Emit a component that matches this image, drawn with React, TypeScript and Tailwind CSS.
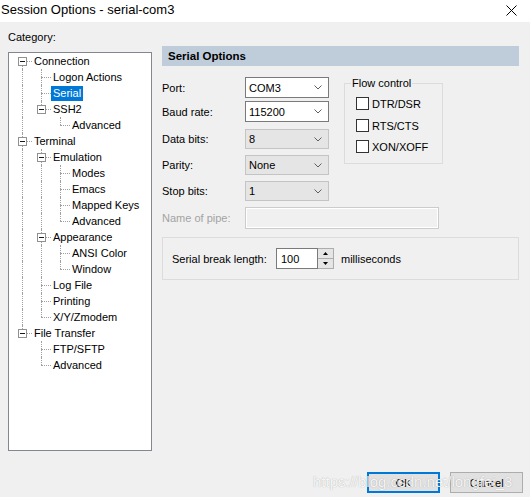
import React from "react";

type Node = {
  label: string;
  level: number;
  exp?: boolean;
  next: boolean;
  anc: boolean[]; // continuation flags of ancestors at levels 0..level-1
  first?: boolean;
  selected?: boolean;
};

const nodes: Node[] = [
  { label: "Connection", level: 0, exp: true, next: true, anc: [], first: true },
  { label: "Logon Actions", level: 1, next: true, anc: [true] },
  { label: "Serial", level: 1, next: true, anc: [true], selected: true },
  { label: "SSH2", level: 1, exp: true, next: false, anc: [true] },
  { label: "Advanced", level: 2, next: false, anc: [true, false] },
  { label: "Terminal", level: 0, exp: true, next: true, anc: [] },
  { label: "Emulation", level: 1, exp: true, next: true, anc: [true] },
  { label: "Modes", level: 2, next: true, anc: [true, true] },
  { label: "Emacs", level: 2, next: true, anc: [true, true] },
  { label: "Mapped Keys", level: 2, next: true, anc: [true, true] },
  { label: "Advanced", level: 2, next: false, anc: [true, true] },
  { label: "Appearance", level: 1, exp: true, next: true, anc: [true] },
  { label: "ANSI Color", level: 2, next: true, anc: [true, true] },
  { label: "Window", level: 2, next: false, anc: [true, true] },
  { label: "Log File", level: 1, next: true, anc: [true] },
  { label: "Printing", level: 1, next: true, anc: [true] },
  { label: "X/Y/Zmodem", level: 1, next: false, anc: [true] },
  { label: "File Transfer", level: 0, exp: true, next: false, anc: [] },
  { label: "FTP/SFTP", level: 1, next: true, anc: [false] },
  { label: "Advanced", level: 1, next: false, anc: [false] },
];

function AncCell({ on }: { on: boolean }) {
  return (
    <div className="relative w-[19px] h-4 shrink-0">
      {on && <span className="absolute left-[9px] top-0 h-4 border-l border-dotted border-[#a0a0a0]" />}
    </div>
  );
}

function OwnCell({ n }: { n: Node }) {
  return (
    <div className="relative w-[19px] h-4 shrink-0">
      {!n.first && <span className="absolute left-[9px] top-0 h-[8px] border-l border-dotted border-[#a0a0a0]" />}
      {n.next && <span className="absolute left-[9px] top-[8px] h-[8px] border-l border-dotted border-[#a0a0a0]" />}
      <span className="absolute left-[9px] top-[8px] w-[10px] border-t border-dotted border-[#a0a0a0]" />
      {n.exp && (
        <span className="absolute left-[5px] top-[4px] w-[9px] h-[9px] border border-[#919191] bg-white flex items-center justify-center">
          <span className="w-[5px] h-px bg-[#1a1a1a]" />
        </span>
      )}
    </div>
  );
}

function Chevron() {
  return (
    <svg width="8" height="5" viewBox="0 0 8 5" className="shrink-0">
      <polyline points="0.5,0.5 4,4 7.5,0.5" fill="none" stroke="#606060" strokeWidth="1" />
    </svg>
  );
}

function Combo({ value, enabled }: { value: string; enabled?: boolean }) {
  return (
    <div
      className={
        enabled
          ? "w-[84px] h-[21px] border border-[#7a7a7a] bg-white flex items-center justify-between pl-[3px] pr-[6px]"
          : "w-[84px] h-[20px] border border-[#c4c4c4] bg-[#e5e5e5] flex items-center justify-between pl-[3px] pr-[6px]"
      }
    >
      <span>{value}</span>
      <Chevron />
    </div>
  );
}

function Check({ label, className }: { label: string; className?: string }) {
  return (
    <div className={"flex items-center h-[13px] " + (className ?? "")}>
      <span className="w-[13px] h-[13px] border border-[#333333] bg-white shrink-0" />
      <span className="ml-[3px] whitespace-nowrap">{label}</span>
    </div>
  );
}

export default function App() {
  return (
    <div className="relative w-[530px] h-[497px] bg-[#f0f0f0] overflow-hidden flex flex-col text-[11px] leading-[14px] text-black font-['Liberation_Sans',Arial,sans-serif]">
      {/* Title bar */}
      <div className="h-[22px] bg-white flex items-start justify-between pt-[2px] shrink-0">
        <span className="text-[13px] leading-[16px] pl-[1px]">Session Options - serial-com3</span>
        <svg width="11" height="11" viewBox="0 0 11 11" className="mt-[3px] mr-[13px]">
          <line x1="0.5" y1="0.5" x2="10.5" y2="10.5" stroke="#000" strokeWidth="1" />
          <line x1="10.5" y1="0.5" x2="0.5" y2="10.5" stroke="#000" strokeWidth="1" />
        </svg>
      </div>

      {/* Main */}
      <div className="flex h-[429px] shrink-0">
        {/* Left: category tree */}
        <div className="w-[152px] pl-[8px] pt-[8px] flex flex-col shrink-0">
          <div className="h-[14px] leading-[14px]">Category:</div>
          <div className="mt-[8px] h-[399px] w-[144px] border border-[#828790] bg-white pl-[4px]">
            {nodes.map((n, i) => (
              <div key={i} className="flex h-4 items-center">
                {n.anc.map((a, j) => (
                  <AncCell key={j} on={a} />
                ))}
                <OwnCell n={n} />
                <span
                  className={
                    n.selected
                      ? "px-[2px] leading-[15px] bg-[#0078d7] text-white whitespace-nowrap"
                      : "px-[2px] leading-[15px] whitespace-nowrap"
                  }
                >
                  {n.label}
                </span>
              </div>
            ))}
          </div>
        </div>

        {/* Right: options */}
        <div className="ml-[10px] pt-[24px] w-[357px] flex flex-col">
          <div className="h-[20px] bg-[#bfcddb] pl-[6px] flex items-center font-bold text-[11.5px]">Serial Options</div>

          <div className="flex items-start mt-[11px]">
            <div className="flex flex-col w-[167px]">
              <div className="flex items-center h-[21px]">
                <span className="w-[83px]">Port:</span>
                <Combo value="COM3" enabled />
              </div>
              <div className="flex items-center h-[21px] mt-[3px]">
                <span className="w-[83px]">Baud rate:</span>
                <Combo value="115200" enabled />
              </div>
              <div className="flex items-center h-[20px] mt-[7px]">
                <span className="w-[83px]">Data bits:</span>
                <Combo value="8" />
              </div>
              <div className="flex items-center h-[20px] mt-[6px]">
                <span className="w-[83px]">Parity:</span>
                <Combo value="None" />
              </div>
              <div className="flex items-center h-[20px] mt-[6px]">
                <span className="w-[83px]">Stop bits:</span>
                <Combo value="1" />
              </div>
            </div>

            <fieldset className="ml-[15px] w-[99px] border border-[#dcdcdc] pl-[6px] pr-[6px] pb-[10px]">
              <legend className="px-[1px] leading-[13px]">Flow control</legend>
              <div className="pl-[5px] pt-[7px] flex flex-col">
                <Check label="DTR/DSR" />
                <Check label="RTS/CTS" className="mt-[9px]" />
                <Check label="XON/XOFF" className="mt-[8px]" />
              </div>
            </fieldset>
          </div>

          <div className="flex items-center h-[22px] mt-[6px]">
            <span className="w-[83px] text-[#a3a3a3]">Name of pipe:</span>
            <div className="w-[194px] h-[22px] border border-[#cccccc] bg-[#f0f0f0] shadow-[inset_0_0_0_1px_#ffffff]" />
          </div>

          <div className="mt-[8px] h-[43px] w-[357px] border border-[#dcdcdc] flex items-center pl-[9px]">
            <span className="w-[104px] whitespace-nowrap">Serial break length:</span>
            <div className="w-[42px] h-[21px] border border-[#7a7a7a] bg-white flex items-center pl-[4px]">100</div>
            <div className="w-[16px] h-[21px] flex flex-col">
              <div className="flex-1 border border-l-0 border-[#adadad] bg-[#e5e5e5] flex items-center justify-center">
                <svg width="5" height="3" viewBox="0 0 5 3">
                  <polygon points="2.5,0 5,3 0,3" fill="#000" />
                </svg>
              </div>
              <div className="flex-1 border border-l-0 border-t-0 border-[#adadad] bg-[#e5e5e5] flex items-center justify-center">
                <svg width="5" height="3" viewBox="0 0 5 3">
                  <polygon points="0,0 5,0 2.5,3" fill="#000" />
                </svg>
              </div>
            </div>
            <span className="ml-[7px]">milliseconds</span>
          </div>
        </div>
      </div>

      {/* Buttons */}
      <div className="mt-[21px] h-[21px] flex justify-end gap-[10px] pr-[7px] shrink-0">
        <button className="w-[73px] h-[21px] border-2 border-[#0078d7] bg-[#e1e1e1] flex items-center justify-center">OK</button>
        <button className="w-[73px] h-[21px] border border-[#adadad] bg-[#e1e1e1] flex items-center justify-center">Cancel</button>
      </div>

      {/* Watermark */}
      <div className="pointer-events-none absolute left-[313px] top-[473px] text-[15px] leading-[18px] text-white/90 whitespace-nowrap [text-shadow:0_0_1px_rgba(0,0,0,0.35)]">
        https://blog.csdn.net/longfei_3
      </div>
    </div>
  );
}
